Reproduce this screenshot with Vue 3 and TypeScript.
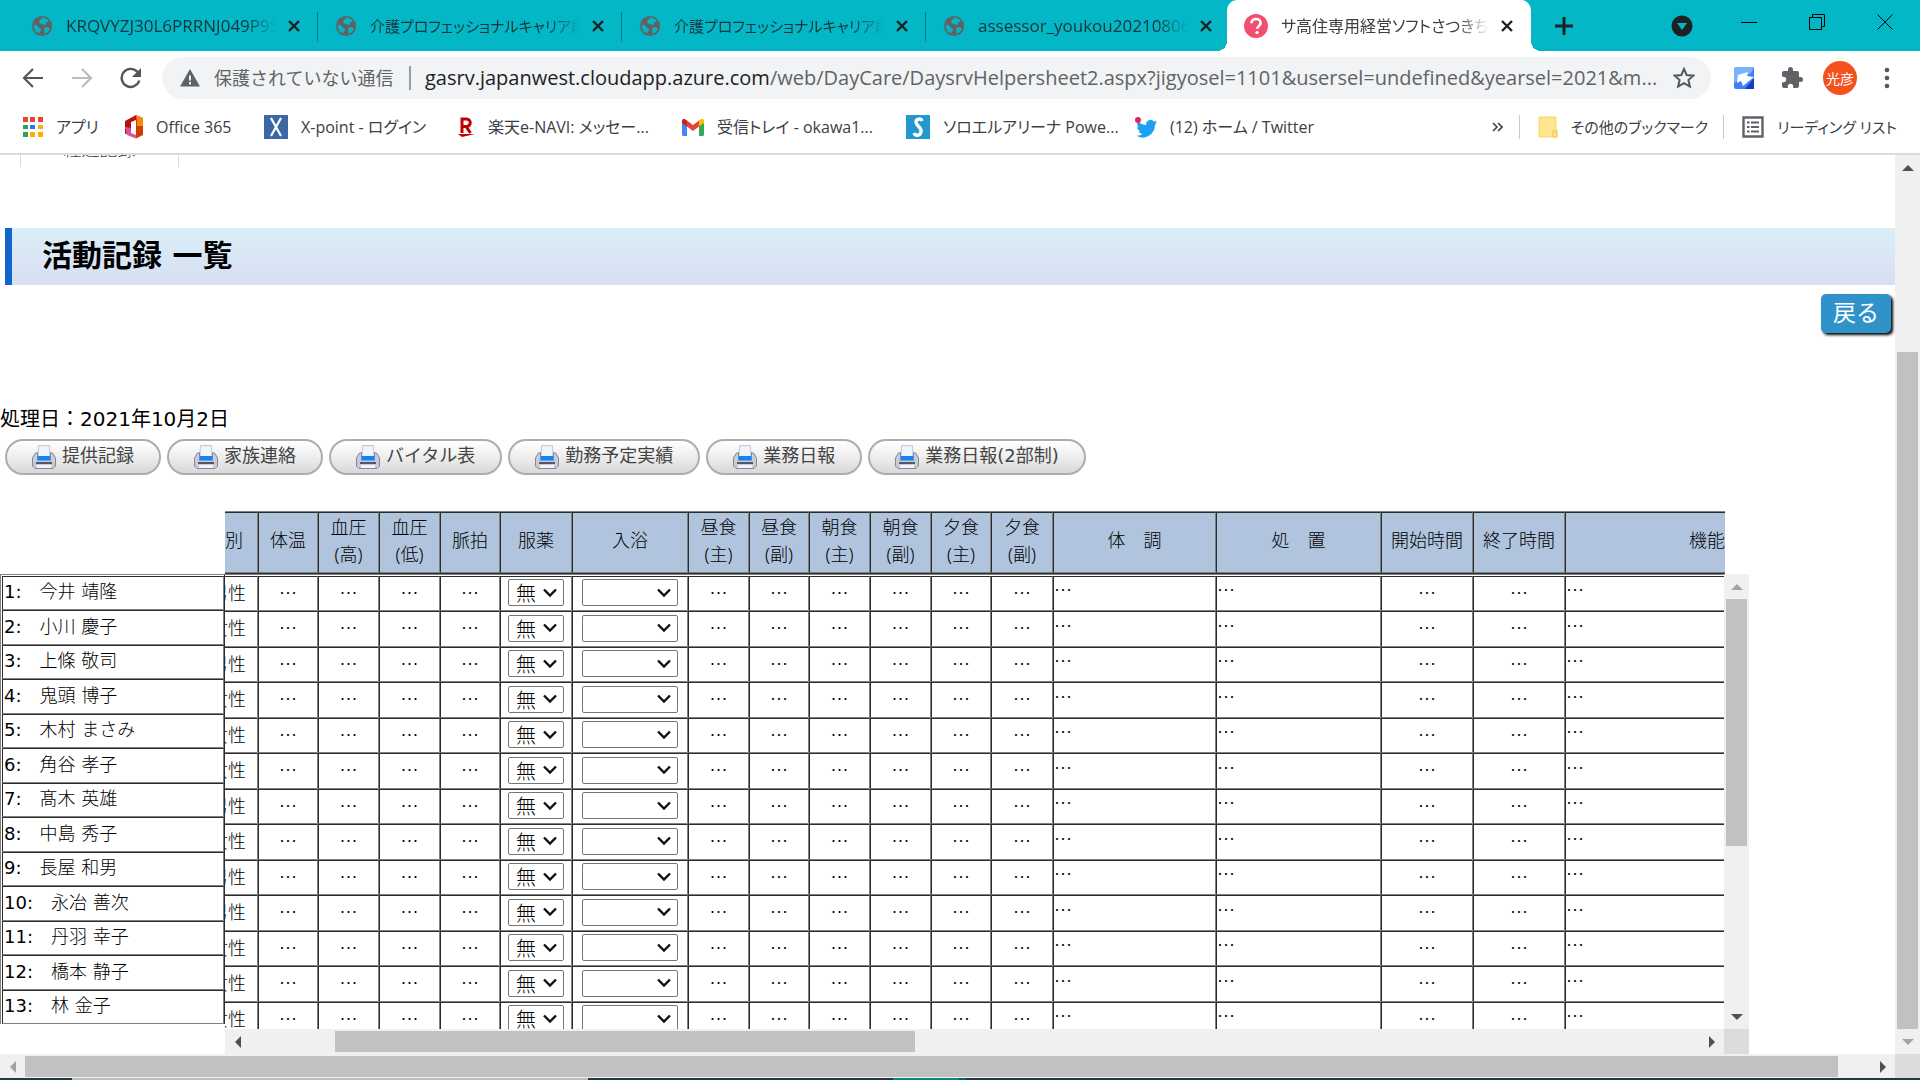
<script setup lang="ts">
import { ref } from 'vue'

interface Tab { title: string; size: string; active?: boolean }
interface Bookmark { icon: string; label: string; width: number }
interface Person { name: string; sex: string; medicine: string; bath: string }

const tabs: Tab[] = [
  { title: 'KRQVYZJ30L6PRRNJ049P9S', size: 'latin' },
  { title: '介護プロフェッショナルキャリア段位', size: 'kana' },
  { title: '介護プロフェッショナルキャリア段位', size: 'kana' },
  { title: 'assessor_youkou20210806.pdf', size: 'latin' },
  { title: 'サ高住専用経営ソフトさつきちゃん', size: 'mixed', active: true },
]

const bookmarks: Bookmark[] = [
  { icon: 'apps', label: 'アプリ', width: 102 },
  { icon: 'office', label: 'Office 365', width: 139 },
  { icon: 'xpoint', label: 'X-point - ログイン', width: 194 },
  { icon: 'rakuten', label: '楽天e-NAVI: メッセー...', width: 224 },
  { icon: 'gmail', label: '受信トレイ - okawa1...', width: 224 },
  { icon: 'soloel', label: 'ソロエルアリーナ Powe...', width: 229 },
  { icon: 'twitter', label: '(12) ホーム / Twitter', width: 190 },
]

const reports = ['提供記録', '家族連絡', 'バイタル表', '勤務予定実績', '業務日報', '業務日報(2部制)']

const columns = [
  { lines: ['性別'], width: 66 },
  { lines: ['体温'], width: 60 },
  { lines: ['血圧', '(高)'], width: 61 },
  { lines: ['血圧', '(低)'], width: 61 },
  { lines: ['脈拍'], width: 60 },
  { lines: ['服薬'], width: 72 },
  { lines: ['入浴'], width: 116 },
  { lines: ['昼食', '(主)'], width: 61 },
  { lines: ['昼食', '(副)'], width: 60 },
  { lines: ['朝食', '(主)'], width: 61 },
  { lines: ['朝食', '(副)'], width: 61 },
  { lines: ['夕食', '(主)'], width: 60 },
  { lines: ['夕食', '(副)'], width: 62 },
  { lines: ['体　調'], width: 163 },
  { lines: ['処　置'], width: 165 },
  { lines: ['開始時間'], width: 92 },
  { lines: ['終了時間'], width: 92 },
  { lines: ['機能訓練'], width: 320 },
]

const person = (name: string, sex: string): Person => ({ name, sex, medicine: '無', bath: '' })
const people = ref<Person[]>([
  person('今井 靖隆', '男性'),
  person('小川 慶子', '女性'),
  person('上條 敬司', '男性'),
  person('鬼頭 博子', '女性'),
  person('木村 まさみ', '女性'),
  person('角谷 孝子', '女性'),
  person('髙木 英雄', '男性'),
  person('中島 秀子', '女性'),
  person('長屋 和男', '男性'),
  person('永冶 善次', '男性'),
  person('丹羽 幸子', '女性'),
  person('橋本 静子', '女性'),
  person('林 金子', '女性'),
])
</script>

<template>
  <div class="window">
    <header class="tabstrip">
      <div class="tabs">
        <div v-for="(t, i) in tabs" :key="i" class="tab" :class="{ active: t.active }">
          <svg v-if="t.active" class="favicon" viewBox="0 0 24 24">
            <circle cx="12" cy="12" r="12" fill="#f0506e" />
            <path d="M7.500 9.200C7.500 6.500 9.500 5 12 5s4.600 1.500 4.600 4c0 3-3.400 3.200-3.400 5.800" fill="none" stroke="#fff" stroke-width="2.600" />
            <circle cx="13" cy="18.600" r="1.700" fill="#fff" />
          </svg>
          <svg v-else class="favicon" viewBox="0 0 24 24">
            <circle cx="12" cy="12" r="11" fill="#5f6368" />
            <path d="M3 11c3 0 4 .5 5 2s3 1 3 3-2 2-2 4c-4-1-6.500-5-6-9zM12 3c2-.5 6 1 7.500 3.500-1 1-2 .5-3 1.500s1 2.500-1 3-2-1.500-4-1.500-3-1-2-3 2-1.500 2.500-3.500zM15 14c2-1 4-.5 5.500.5-1 3-3 5-5.500 6 .5-2-1.500-4 0-6.500z" fill="#03b7c6" />
          </svg>
          <span class="tab-title" :class="t.size">{{ t.title }}</span>
          <button class="plain tab-close" aria-label="閉じる">
            <svg width="14" height="14" viewBox="0 0 14 14"><path d="M2 2l10 10M12 2L2 12" stroke="#1d2124" stroke-width="2.400" /></svg>
          </button>
        </div>
        <button class="plain new-tab" aria-label="新しいタブ">
          <svg width="20" height="20" viewBox="0 0 20 20"><path d="M10 1v18M1 10h18" stroke="#1d2124" stroke-width="3" /></svg>
        </button>
      </div>
      <div class="controls">
        <button class="plain" aria-label="タブを検索">
          <svg width="22" height="22" viewBox="0 0 22 22"><circle cx="11" cy="11" r="10.500" fill="#1d2124" /><path d="M6 8h10l-5 7z" fill="#03b7c6" /></svg>
        </button>
        <button class="plain" aria-label="最小化">
          <svg width="16" height="16" viewBox="0 0 16 16"><path d="M0 8.500h16" stroke="#000" /></svg>
        </button>
        <button class="plain" aria-label="元に戻す">
          <svg width="16" height="16" viewBox="0 0 16 16"><path d="M.5 3.500h12v12H.5zM3.500 3.500v-3h12v12h-3" fill="none" stroke="#000" /></svg>
        </button>
        <button class="plain" aria-label="ウィンドウを閉じる">
          <svg width="16" height="16" viewBox="0 0 16 16"><path d="M.5.5l15 15M15.500.5l-15 15" stroke="#000" /></svg>
        </button>
      </div>
    </header>

    <div class="toolbar">
      <button class="plain nav" aria-label="戻る">
        <svg width="22" height="22" viewBox="0 0 22 22"><path d="M21 11H2.500M11 2l-9 9 9 9" fill="none" stroke="#53575b" stroke-width="2.200" /></svg>
      </button>
      <button class="plain nav" aria-label="進む">
        <svg width="22" height="22" viewBox="0 0 22 22"><path d="M1 11h18.500M11 2l9 9-9 9" fill="none" stroke="#babcbe" stroke-width="2.200" /></svg>
      </button>
      <button class="plain nav" aria-label="再読み込み">
        <svg width="22" height="22" viewBox="0 0 22 22"><path d="M19.300 13.500A9 9 0 1 1 17.500 5" fill="none" stroke="#53575b" stroke-width="2.400" /><path d="M21 1v9h-9z" fill="#53575b" /></svg>
      </button>
      <div class="omnibox">
        <svg class="warn" width="20" height="18" viewBox="0 0 20 18"><path d="M10 0l10 17.500H0z" fill="#5f6368" /><path d="M10 6.500v5M10 13v2.500" stroke="#f1f3f4" stroke-width="2" /></svg>
        <span class="insecure">保護されていない通信</span>
        <span class="url"><b>gasrv.japanwest.cloudapp.azure.com</b>/web/DayCare/DaysrvHelpersheet2.aspx?jigyosel=1101&amp;usersel=undefined&amp;yearsel=2021&amp;m...</span>
        <button class="plain star" aria-label="ブックマーク">
          <svg width="22" height="22" viewBox="0 0 22 22"><path d="M11 2l2.700 6.100 6.700.6-5 4.400 1.500 6.500L11 16.200l-5.900 3.400 1.500-6.500-5-4.400 6.700-.6z" fill="none" stroke="#53575b" stroke-width="2" /></svg>
        </button>
      </div>
      <div class="extensions">
        <button class="plain first" aria-label="拡張機能">
          <svg width="22" height="24" viewBox="0 0 22 24"><path d="M4 1h17v22H3a2 2 0 0 1-2-2V4a3 3 0 0 1 3-3z" fill="#3f7ff5" /><path d="M4 1h17l-3 6L1 17V4a3 3 0 0 1 3-3z" fill="#7ab3fb" /><path d="M5 9l10-3-1 4 7 1-11 9-2-5-4 2z" fill="#fff" /><path d="M21 12v11h-9z" fill="#153fc0" /></svg>
        </button>
        <button class="plain" aria-label="拡張機能一覧">
          <svg width="24" height="24" viewBox="0 0 24 24"><path d="M20.500 11H19V7a2 2 0 0 0-2-2h-4V3.500a2.500 2.500 0 0 0-5 0V5H4a2 2 0 0 0-2 2v3.800h1.500a2.700 2.700 0 0 1 0 5.400H2V20a2 2 0 0 0 2 2h3.800v-1.500a2.700 2.700 0 0 1 5.400 0V22H17a2 2 0 0 0 2-2v-4h1.500a2.500 2.500 0 0 0 0-5z" fill="#5f6368" /></svg>
        </button>
        <button class="plain avatar">光彦</button>
        <button class="plain" aria-label="メニュー">
          <svg width="6" height="22" viewBox="0 0 6 22"><g fill="#53575b"><circle cx="3" cy="3" r="2.300" /><circle cx="3" cy="11" r="2.300" /><circle cx="3" cy="19" r="2.300" /></g></svg>
        </button>
      </div>
    </div>

    <nav class="bookmarks">
      <a v-for="b in bookmarks" :key="b.icon" href="#" class="bookmark" :style="{ width: b.width + 'px' }">
        <svg v-if="b.icon === 'apps'" width="20" height="20" viewBox="0 0 20 20">
          <path d="M0 0h5v5H0zM7 0h5v5H7zM15 0h5v5h-5z" fill="#ea4335" /><path d="M0 8h5v4H0zM0 15h5v5H0z" fill="#34a053" /><path d="M7 8h5v4H7z" fill="#1a80f0" /><path d="M15 8h5v4h-5zM7 15h5v5H7zM15 15h5v5h-5z" fill="#fbad08" />
        </svg>
        <svg v-else-if="b.icon === 'office'" width="18" height="24" viewBox="0 0 18 24">
          <path d="M11 0l7 3v17l-7 3.500z" fill="#d83b01" /><path d="M11 0v5L6 7v11L0 19V6z" fill="#b5121b" /><path d="M0 12l6 1v5l5 2v3.500L2 20z" fill="#d7519b" />
          <path d="M11 0l7 3v8h-6V5z" fill="#f08a10" />
        </svg>
        <svg v-else-if="b.icon === 'xpoint'" width="24" height="24" viewBox="0 0 24 24">
          <path d="M0 0h24v24H0z" fill="#3c68a4" /><path d="M7 3l10 18M17 3L7 21" stroke="#fff" stroke-width="2.200" />
        </svg>
        <svg v-else-if="b.icon === 'rakuten'" width="17" height="20" viewBox="0 0 17 20">
          <path d="M4 16V2h4.500a3.700 3.700 0 0 1 0 7.500H4M8 9.500l4.500 6.500" fill="none" stroke="#bf0000" stroke-width="3" /><path d="M0 17h17l-13 3z" fill="#bf0000" />
        </svg>
        <svg v-else-if="b.icon === 'gmail'" width="22" height="17" viewBox="0 0 22 17">
          <path d="M0 3l5 3.500V17H1.500A1.500 1.500 0 0 1 0 15.500z" fill="#4285f4" /><path d="M22 3l-5 3.500V17h3.500a1.500 1.500 0 0 0 1.500-1.500z" fill="#34a853" /><path d="M5 1.500l6 4.500 6-4.500v6L11 12 5 7.500z" fill="#ea4335" /><path d="M5 7.500L0 4V2C0 .2 2-.8 3.500.4L5 1.500z" fill="#c5221f" /><path d="M17 7.500L22 4V2c0-1.800-2-2.800-3.500-1.600L17 1.500z" fill="#fbbc04" />
        </svg>
        <svg v-else-if="b.icon === 'soloel'" width="24" height="24" viewBox="0 0 24 24">
          <path d="M0 0h24v24H0z" fill="#2597cf" /><path d="M16 6c-1-3-6-2.500-6 1 0 4 6 5 5 10-1 4.500-6 4-7 1" fill="none" stroke="#fff" stroke-width="3.400" />
        </svg>
        <svg v-else width="22" height="21" viewBox="0 0 22 21">
          <path d="M22 5a8 8 0 0 1-2.400.8 4 4 0 0 0 1.800-2.300 8 8 0 0 1-2.500 1A4.300 4.300 0 0 0 11.300 8 12 12 0 0 1 3 4.500a4.300 4.300 0 0 0 1 5.700 4 4 0 0 1-1.800-.5c0 2 1.300 3.800 3.200 4.200a4 4 0 0 1-1.700 0 4.200 4.200 0 0 0 3.800 3A8.500 8.500 0 0 1 1 18.600 12.300 12.300 0 0 0 19.900 8 9 9 0 0 0 22 5z" fill="#1da1f2" /><circle cx="3" cy="3" r="3" fill="#e0245e" />
        </svg>
        <span>{{ b.label }}</span>
      </a>
      <button class="plain overflow" aria-label="その他">
        <svg width="11" height="10" viewBox="0 0 11 10"><path d="M1 1l4 4-4 4M6 1l4 4-4 4" fill="none" stroke="#3c4043" stroke-width="1.600" /></svg>
      </button>
      <a href="#" class="bookmark others">
        <svg width="20" height="22" viewBox="0 0 20 22"><path d="M1 1h17v13h1v7H1z" fill="#ffe58f" stroke="#f7d768" /><path d="M15 21v-6h3.500v6z" fill="#ffe58f" stroke="#eec53c" /></svg>
        <span>その他のブックマーク</span>
      </a>
      <a href="#" class="bookmark reading">
        <svg width="22" height="22" viewBox="0 0 22 22"><path d="M1.500 1.500h19v19h-19z" fill="none" stroke="#5f6368" stroke-width="2.400" /><path d="M5 6.500h2.500M5 11h2.500M5 15.500h2.500M9 6.500h8M9 11h8M9 15.500h8" stroke="#5f6368" stroke-width="2" /></svg>
        <span>リーディング リスト</span>
      </a>
    </nav>

    <div class="viewport">
      <main class="page">
        <div class="section-tab"><span>経過記録</span></div>
        <h1 class="title">活動記録 一覧</h1>
        <button class="back">戻る</button>
        <p class="date">処理日：2021年10月2日</p>
        <div class="reports">
          <button v-for="r in reports" :key="r" class="report">
            <svg width="24" height="24" viewBox="0 0 24 24">
              <path d="M6.500.5h11L18 13H6z" fill="#e6eff9" stroke="#c3cbd8" />
              <path d="M3 8.500l2.500-1V13h13V7.500l2.500 1L23.500 13v8L21 23.500H3L.5 21v-8z" fill="#c9cbd6" stroke="#85869a" />
              <path d="M7 2h10v9H7z" fill="#eef4fc" /><path d="M6 11h12l1 4.500H5z" fill="#1683f5" />
              <path d="M4 17h16v2H4z" fill="#555766" /><path d="M5 20h14v3H5z" fill="#f3f4f8" />
            </svg>
            <span>{{ r }}</span>
          </button>
        </div>

        <section class="board">
          <div class="names">
            <table>
              <tbody>
                <tr v-for="(p, i) in people" :key="p.name">
                  <td><span class="no">{{ i + 1 }}:</span>{{ p.name }}</td>
                </tr>
              </tbody>
            </table>
          </div>
          <div class="sheet">
            <div class="head-clip">
              <table class="grid head">
                <colgroup><col v-for="(c, i) in columns" :key="i" :style="{ width: c.width + 'px' }"></colgroup>
                <thead>
                  <tr>
                    <th v-for="(c, i) in columns" :key="i" scope="col"><div v-for="l in c.lines" :key="l">{{ l }}</div></th>
                  </tr>
                </thead>
              </table>
            </div>
            <div class="body-row">
              <div class="body-clip">
                <table class="grid body">
                  <colgroup><col v-for="(c, i) in columns" :key="i" :style="{ width: c.width + 'px' }"></colgroup>
                  <tbody>
                    <tr v-for="p in people" :key="p.name">
                      <td class="sex">{{ p.sex }}</td>
                      <td v-for="n in 4" :key="'v' + n">…</td>
                      <td class="choice">
                        <select v-model="p.medicine" class="medicine" :aria-label="p.name + ' 服薬'">
                          <option>無</option>
                          <option>有</option>
                        </select>
                      </td>
                      <td class="choice">
                        <select v-model="p.bath" class="bath" :aria-label="p.name + ' 入浴'">
                          <option value=""></option>
                        </select>
                      </td>
                      <td v-for="n in 6" :key="'m' + n">…</td>
                      <td class="note">…</td>
                      <td class="note">…</td>
                      <td>…</td>
                      <td>…</td>
                      <td class="note">…</td>
                    </tr>
                  </tbody>
                </table>
              </div>
              <div class="bar vertical list-v">
                <i class="arrow up off"></i>
                <div class="track"><div class="thumb"></div></div>
                <i class="arrow down"></i>
              </div>
            </div>
            <div class="bar-row">
              <div class="bar horizontal list-h">
                <i class="arrow left"></i>
                <div class="track"><div class="thumb"></div></div>
                <i class="arrow right"></i>
              </div>
              <div class="corner"></div>
            </div>
          </div>
        </section>
      </main>
      <div class="bar vertical page-v">
        <i class="arrow up"></i>
        <div class="track"><div class="thumb"></div></div>
        <i class="arrow down off"></i>
      </div>
    </div>
    <div class="bar-row outer">
      <div class="bar horizontal page-h">
        <i class="arrow left off"></i>
        <div class="track"><div class="thumb"></div></div>
        <i class="arrow right"></i>
      </div>
      <div class="corner"></div>
    </div>
    <div class="taskbar"><i class="light"></i><i class="teal"></i><i class="teal-dark"></i></div>
  </div>
</template>

<style>
body { margin: 0; background: #fff; }
</style>

<style scoped>
* { box-sizing: border-box; }
.window {
  display: flex; flex-direction: column; height: 100vh; overflow: hidden; color: #000;
  font-family: "Open Sans", "Noto Sans CJK JP", sans-serif; font-size: 16px;
}
.plain { display: flex; align-items: center; justify-content: center; padding: 0; border: 0; background: none; flex: none; }
svg { flex: none; display: block; }

.tabstrip { display: flex; justify-content: space-between; flex: none; height: 51px; background: #03b7c6; }
.tabs { display: flex; padding-left: 14px; }
.tab {
  position: relative; display: flex; align-items: center; width: 304px; padding: 0 16px 0 17px; color: #17343a;
}
.tab:not(.active)::after { content: ""; position: absolute; right: 0; top: 12px; width: 1px; height: 29px; background: #0a7280; }
.tab:nth-child(4)::after { display: none; }
.tab.active { background: #fff; color: #3c4043; border-radius: 10px 10px 0 0; margin-left: -3px; }
.tab.active::before, .tab.active::after { content: ""; position: absolute; bottom: 0; width: 10px; height: 10px; }
.tab.active::before { left: -10px; background: radial-gradient(circle at 0 0, transparent 10px, #fff 10px); }
.tab.active::after { right: -10px; background: radial-gradient(circle at 100% 0, transparent 10px, #fff 10px); }
.favicon { width: 22px; height: 22px; }
.tab.active .favicon { width: 24px; height: 24px; }
.tab-title {
  flex: 1; margin: 0 10px 0 13px; overflow: hidden; white-space: nowrap; line-height: 24px; font-feature-settings: "palt";
  -webkit-mask-image: linear-gradient(90deg, #000 85%, transparent); mask-image: linear-gradient(90deg, #000 85%, transparent);
}
.tab-title.latin { font-size: 17px; }
.tab-title.kana { font-size: 15px; }
.tab-close { width: 16px; }
.new-tab { width: 66px; }
.controls { display: flex; align-items: center; gap: 52px; padding: 0 27px 8px 0; }
.controls .plain:first-child { margin: 8px -4px 0 0; }

.toolbar { display: flex; align-items: center; flex: none; height: 54px; padding: 0 30px 0 8px; }
.nav { width: 49px; }
.omnibox { display: flex; align-items: center; flex: 1; min-width: 0; height: 42px; margin-left: 7px; padding: 0 16px 0 18px; border-radius: 21px; background: #f1f3f4; }
.insecure { width: 197px; margin-left: 14px; border-right: 2px solid #9a9da0; font-size: 18px; line-height: 24px; color: #5f6368; white-space: nowrap; }
.url { flex: 1; min-width: 0; margin-left: 14px; overflow: hidden; white-space: nowrap; font-size: 20px; line-height: 28px; color: #5f6368; }
.url b { font-weight: 400; color: #202124; }
.extensions { display: flex; align-items: center; gap: 21px; padding-left: 22px; }
.first { margin-right: 4px; }
.avatar { width: 34px; height: 34px; margin: 0 6px 0 -2px; border-radius: 50%; background: #f4511e; color: #fff; font: 14px "Noto Sans CJK JP", sans-serif; }

.bookmarks { display: flex; align-items: center; flex: none; height: 50px; padding: 0 23px 4px 23px; border-bottom: 2px solid #dadce0; }
.bookmark { display: flex; align-items: center; flex: none; gap: 13px; color: #3c4043; text-decoration: none; white-space: nowrap; font-feature-settings: "palt"; line-height: 24px; }
.overflow { margin-left: auto; margin-right: 16px; }
.others, .reading { height: 24px; border-left: 1px solid #c8cacd; padding-left: 18px; font-size: 15px; }
.others { margin-right: 15px; }

.viewport { display: flex; flex: 1; min-height: 0; }
.page { display: flex; flex-direction: column; flex: 1; min-width: 0; min-height: 0; font-family: "DejaVu Sans", "Noto Sans CJK JP", sans-serif; font-size: 18px; font-weight: 300; }
.section-tab { display: flex; align-items: flex-end; justify-content: center; flex: none; width: 159px; height: 12px; margin-left: 20px; padding-bottom: 5px; border: solid #dadce0; border-width: 0 1px; overflow: hidden; line-height: 24px; color: #444; }
.title { flex: none; height: 57px; margin: 61px 0 0 5px; padding-left: 30px; border-left: 7px solid #1266cc; background: linear-gradient(#daeefa, #d8dff0); font-size: 30px; line-height: 55px; }
.back { align-self: flex-end; flex: none; width: 70px; height: 39px; margin: 9px 4px 0 0; padding: 0 0 4px; border: 0; border-radius: 5px; background: #2f93c9; color: #fff; font: 23px/35px "Noto Sans CJK JP", sans-serif; box-shadow: 2px 2px 3px #000; }
.date { flex: none; margin: 71px 0 5px; font-size: 20px; font-weight: 400; line-height: 30px; }
.reports { display: flex; flex: none; gap: 6px; margin-left: 5px; }
.report { display: flex; align-items: center; gap: 6px; height: 36px; padding: 0 25px; border: 2px solid #adadad; border-radius: 18px; background: linear-gradient(#fff, #f0f0f0 45%, #d8d8d8); color: #444; font: 400 18px/28px "DejaVu Sans", "Noto Sans CJK JP", sans-serif; }
.report span { padding-bottom: 3px; }

.board { display: flex; flex: 1; min-height: 0; margin: 36px 146px 0 0; }
.names { flex: none; width: 225px; margin-top: 63px; }
.names table { width: 225px; border: 1px solid #808080; border-right-color: #2c2c2c; border-bottom: 0; padding: 1px 0 0 1px; border-spacing: 0; }
.names tr:nth-child(odd) { height: 34px; }
.names tr:nth-child(even) { height: 35px; }
.names td { padding: 0 0 2px 1px; line-height: 24px; border: 1px solid; border-color: #2c2c2c #808080 #808080 #2c2c2c; }
.no { margin-right: 18px; font-weight: 400; }
.sheet { display: flex; flex-direction: column; flex: 1; min-width: 0; }
.head-clip { flex: none; height: 63px; margin-right: 24px; overflow: hidden; }
.grid { table-layout: fixed; width: 1693px; margin-left: -33px; border-spacing: 0; text-align: center; }
.grid th, .grid td { padding: 0; border: 1px solid; border-color: #2c2c2c #808080 #808080 #2c2c2c; }
.head { height: 63px; border-top: 1px solid #808080; border-bottom: 1px solid #2c2c2c; background: #b0c4de; }
.grid th { font-family: "Noto Sans", "Noto Sans CJK JP", sans-serif; font-weight: 300; line-height: 27px; padding-bottom: 4px; }
.body-row { display: flex; flex: 1; min-height: 0; }
.body-clip { flex: 1; min-width: 0; overflow: hidden; }
.body { border-top: 1px solid #808080; padding-top: 1px; }
.body tr { height: 35px; }
.body tr:nth-child(even) { height: 36px; }
.body td { padding-bottom: 4px; font-family: "Noto Sans CJK JP", sans-serif; line-height: 26px; }
.body .sex { padding-left: 6px; }
.body .choice { padding-bottom: 2px; }
.body .note { text-align: left; padding-bottom: 9px; line-height: 24px; }
.body select {
  display: block; height: 27px; margin: 0 auto; padding: 0 0 0 7px; border: 1px solid #767676; border-radius: 2px; appearance: none; color: #000;
  font: 300 20px/25px "Noto Sans CJK JP", sans-serif;
  background: #fff url("data:image/svg+xml,%3Csvg xmlns='http://www.w3.org/2000/svg' width='14' height='10'%3E%3Cpath d='M1 1.500l6 6 6-6' fill='none' stroke='%23111' stroke-width='2.400'/%3E%3C/svg%3E") no-repeat right 6px center;
}
.body .medicine { width: 56px; }
.body .bath { width: 96px; }

.bar { display: flex; flex: none; background: #f0f0f0; }
.bar-row { display: flex; flex: none; height: 25px; }
.outer { height: 24px; }
.vertical { flex-direction: column; width: 25px; padding: 0 2px; }
.horizontal { flex: 1; min-width: 0; padding: 2px 0; }
.horizontal.page-h { padding-bottom: 1px; }
.track { display: flex; flex: 1; min-width: 0; min-height: 0; }
.vertical .track { flex-direction: column; }
.thumb { background: #c1c1c1; }
.list-v .thumb { height: 61%; }
.list-h .thumb { width: 40%; margin-left: 85px; }
.page-v .thumb { flex: 1; margin-top: 172px; }
.page-h .thumb { width: calc(100% - 32px); }
.corner { flex: none; width: 25px; background: #dcdcdc; }
.arrow { display: flex; align-items: center; justify-content: center; flex: none; width: 25px; height: 25px; }
.vertical .arrow { width: 21px; }
.horizontal .arrow { height: 21px; }
.arrow::before { content: ""; border: 6px solid transparent; }
.up::before { border-top: 0; border-bottom-color: #505050; }
.down::before { border-bottom: 0; border-top-color: #505050; }
.left::before { border-left: 0; border-right-color: #505050; }
.right::before { border-right: 0; border-left-color: #505050; }
.up.off::before { border-bottom-color: #a3a3a3; }
.down.off::before { border-top-color: #a3a3a3; }
.left.off::before { border-right-color: #a3a3a3; }
.taskbar { display: flex; flex: none; height: 2px; background: #1a3c42; }
.light { width: 516px; margin-left: 72px; background: #bdbdbd; }
.teal { width: 66px; margin-left: 305px; background: #0c8583; }
.teal-dark { width: 7px; background: #0c5f63; }
</style>
